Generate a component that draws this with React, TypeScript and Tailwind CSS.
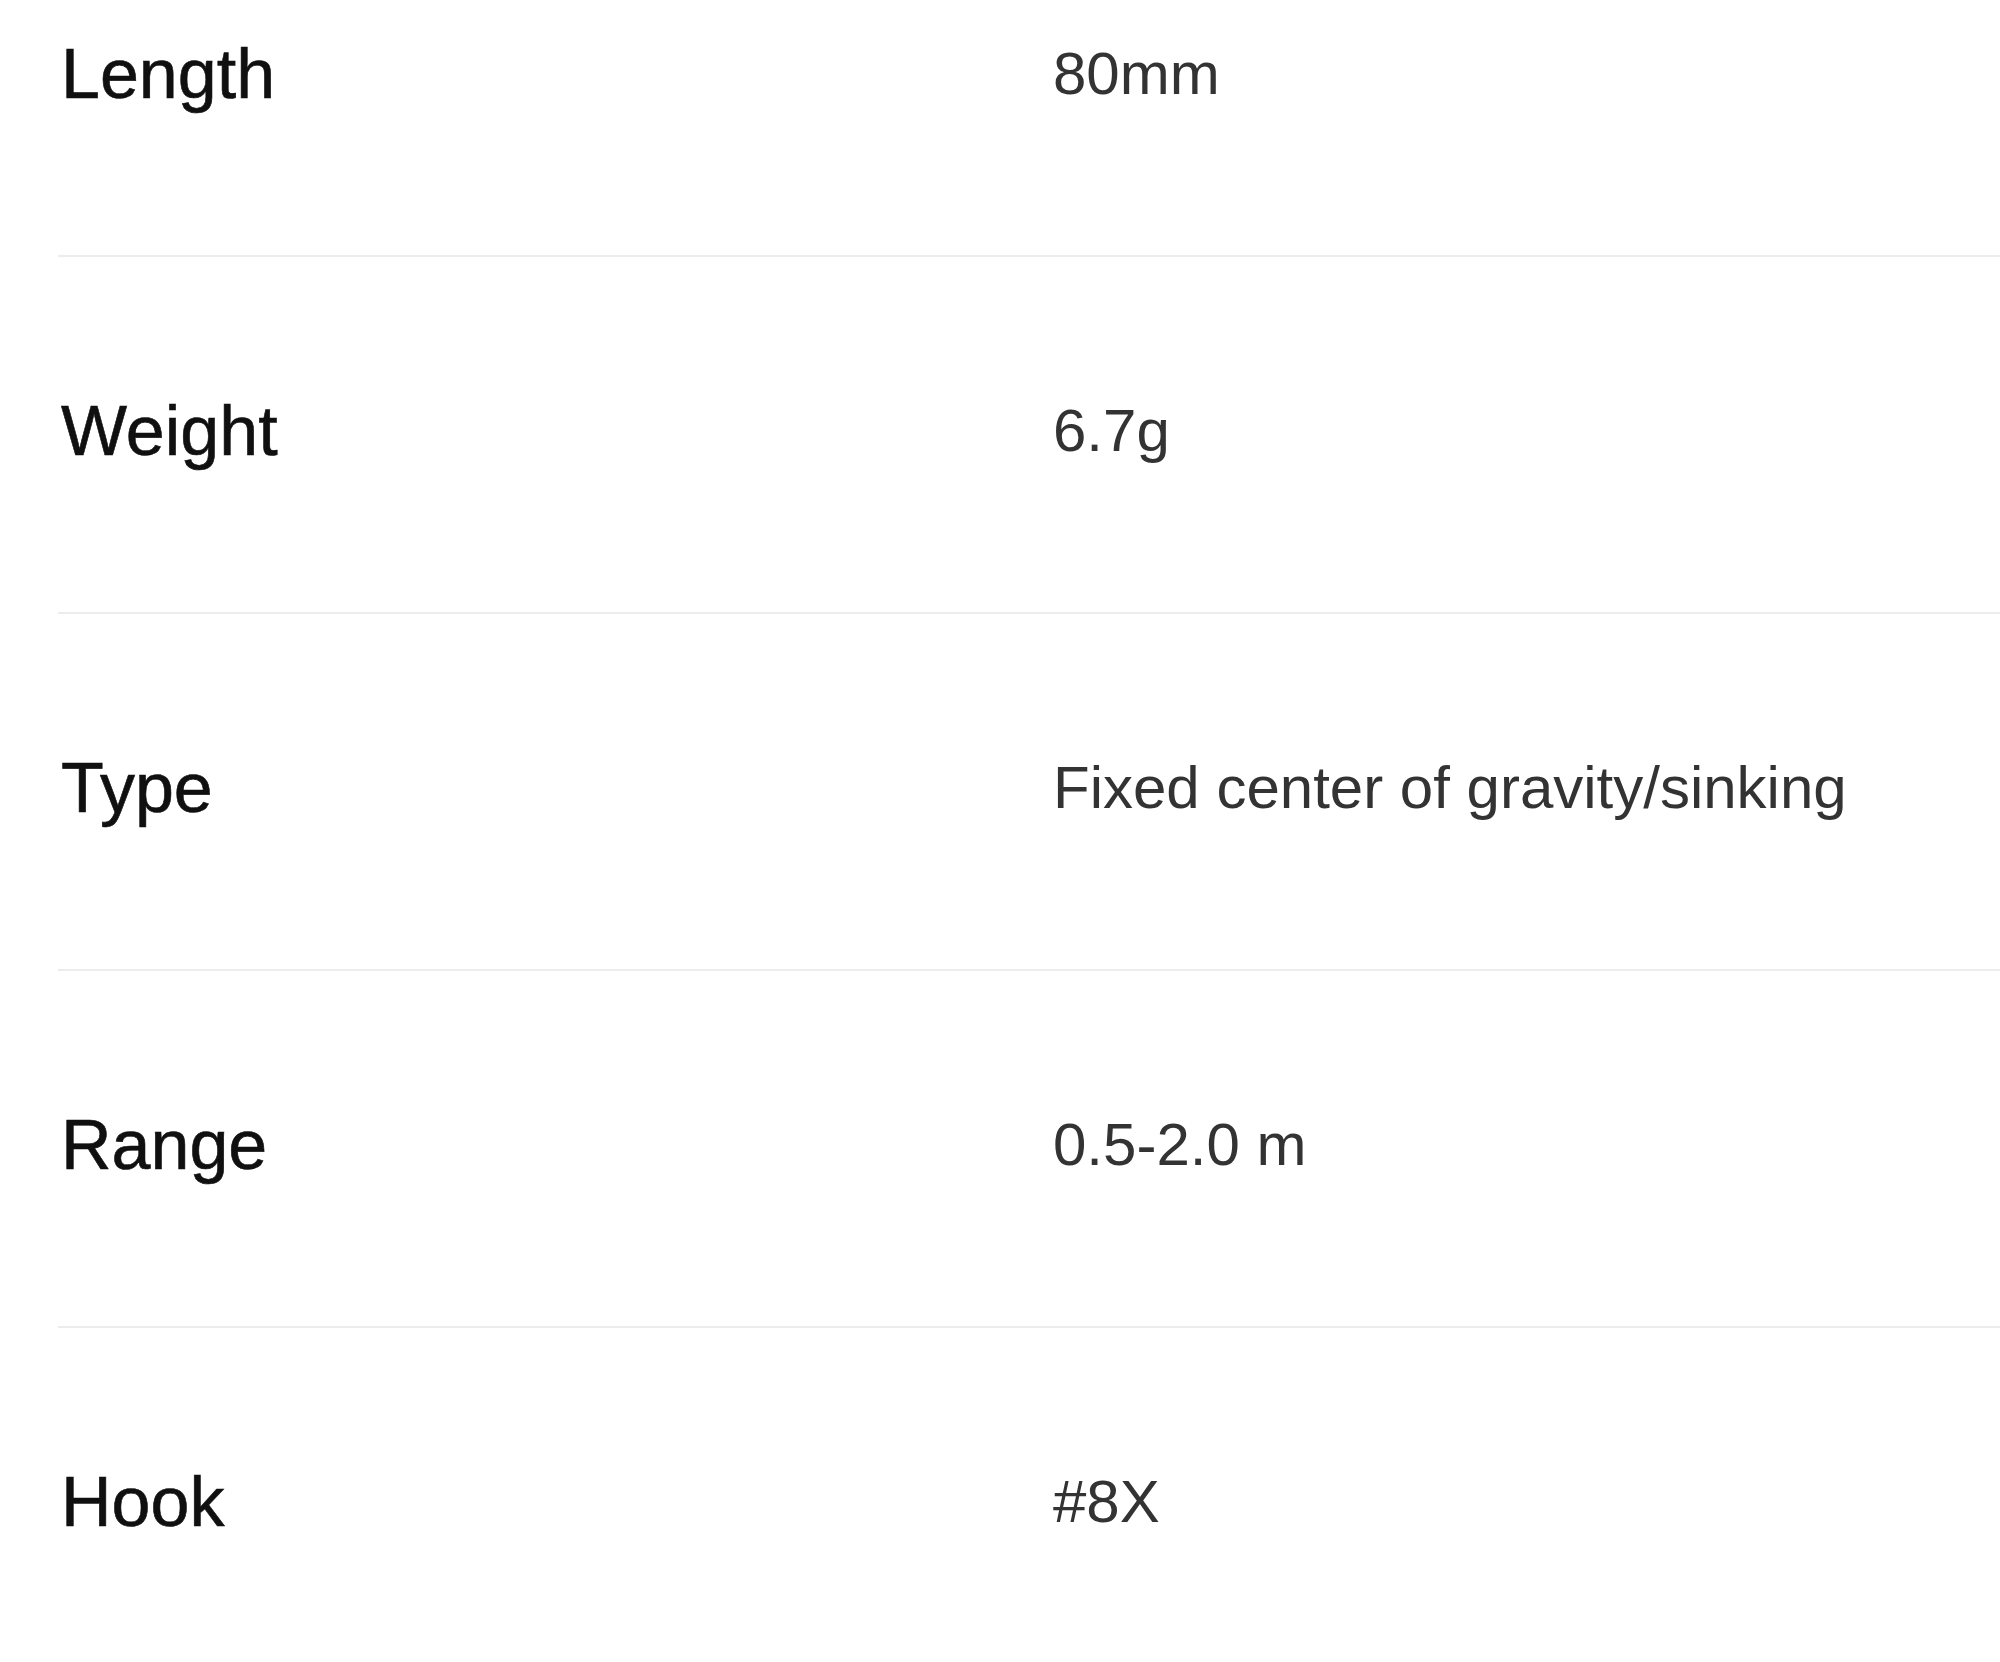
const specs = [
  { label: 'Length', value: '80mm' },
  { label: 'Weight', value: '6.7g' },
  { label: 'Type', value: 'Fixed center of gravity/sinking' },
  { label: 'Range', value: '0.5-2.0 m' },
  { label: 'Hook', value: '#8X' },
]

export default function App() {
  return (
    <div className="h-[1662px] overflow-hidden bg-white font-['Liberation_Sans',Arial,sans-serif]">
      {/* Spec table - the top row is cut off by the screenshot */}
      <div className="-mt-[100px] pl-[58px]">
        {specs.map((row) => (
          <SpecRow key={row.label} label={row.label} value={row.value} />
        ))}
      </div>
    </div>
  )
}

interface SpecRowProps {
  label: string
  value: string
}

function SpecRow({ label, value }: SpecRowProps) {
  return (
    <div className="flex h-[357px] items-start border-b-2 border-[#ececec] pt-[139px]">
      <div className="w-[995px] pl-[3px] text-[70px] leading-none text-[#101010] [-webkit-text-stroke:0.6px_#101010]">
        {label}
      </div>
      <div className="mt-[5px] text-[60px] leading-none text-[#333]">{value}</div>
    </div>
  )
}
